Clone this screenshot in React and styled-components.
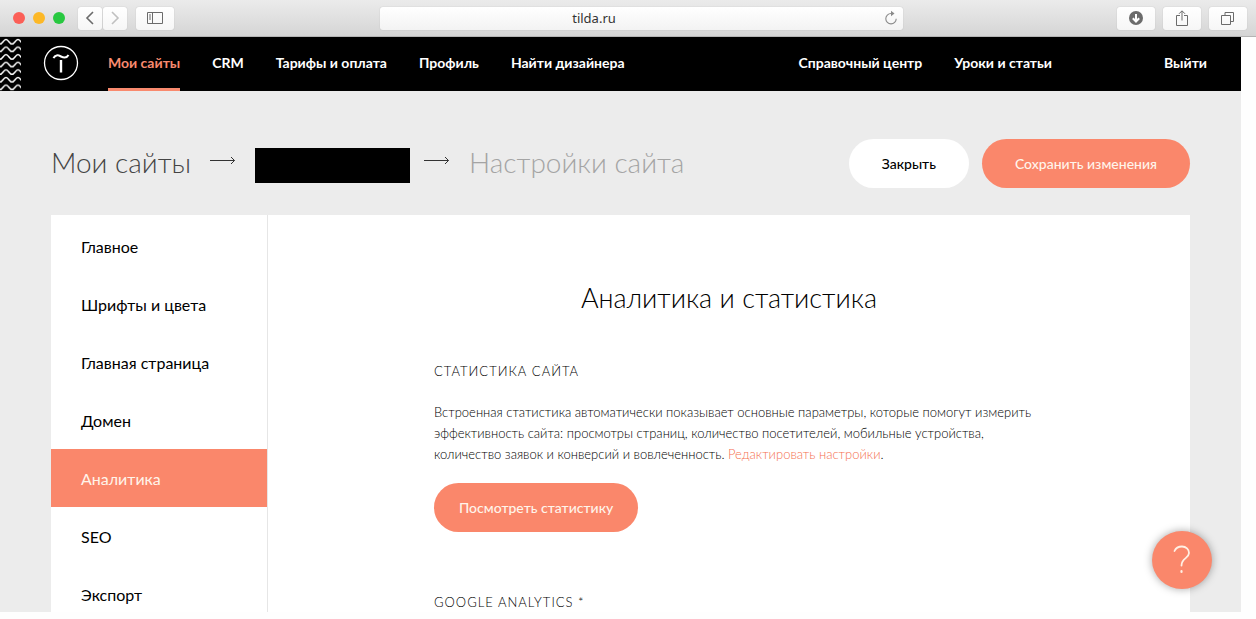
import styled, { createGlobalStyle } from "styled-components";

const menu = ["Мои сайты", "CRM", "Тарифы и оплата", "Профиль", "Найти дизайнера"];
const sections = ["Главное", "Шрифты и цвета", "Главная страница", "Домен", "Аналитика", "SEO", "Экспорт"];

function Chevron({ points, color }) {
    return (
        <svg width="12" height="16" viewBox="0 0 12 16" fill="none" stroke={color} strokeWidth="1.6">
            <polyline points={points} />
        </svg>
    );
}

function Arrow() {
    return (
        <ArrowIcon width="26" height="9" viewBox="0 0 26 9" fill="none" stroke="#333333" strokeWidth="1">
            <path d="M0 4.5H24.5M21 1L24.5 4.5L21 8" />
        </ArrowIcon>
    );
}

function Logo() {
    return (
        <svg width="36" height="36" viewBox="0 0 36 36" fill="none" stroke="#ffffff">
            <circle cx="18" cy="18" r="16.5" strokeWidth="1.3" />
            <path d="M10.5 13.2C12 9.5 15 10 18 11.5S23.5 13.5 25.5 10" strokeWidth="2" />
            <path d="M18 15V27.500" strokeWidth="2.400" />
        </svg>
    );
}

function Waves() {
    return (
        <svg width="21" height="54" fill="none" stroke="#ffffff" strokeWidth="1.5">
            <defs>
                <pattern id="waves" y="1" width="12" height="7.600" patternUnits="userSpaceOnUse">
                    <path d="M-6 1.500C-3.500 1.500 -2.500 6 0 6S3.500 1.500 6 1.500S9.500 6 12 6S15.500 1.500 18 1.500" />
                </pattern>
            </defs>
            <rect width="21" height="54" fill="url(#waves)" stroke="none" />
        </svg>
    );
}

function BrowserBar() {
    return (
        <Toolbar>
            <Side>
                <Lights>
                    <Light $color="#fb5f57" />
                    <Light $color="#fcb827" />
                    <Light $color="#28c840" />
                </Lights>
                <Pair>
                    <ToolButton $width={24} aria-label="Назад"><Chevron points="9,2 3,8 9,14" color="#6b6b6b" /></ToolButton>
                    <ToolButton $width={24} aria-label="Вперёд"><Chevron points="3,2 9,8 3,14" color="#c0c0c0" /></ToolButton>
                </Pair>
                <ToolButton $width={38} aria-label="Боковая панель">
                    <svg width="16" height="12" viewBox="0 0 16 12" fill="none" stroke="#6b6b6b">
                        <path d="M.5 .5H15.500V11.500H.5ZM5.500 .5V11.500M2 3H4M2 5H4M2 7H4" />
                    </svg>
                </ToolButton>
            </Side>
            <Address>
                <input type="text" aria-label="Адрес" defaultValue="tilda.ru" />
                <Reload aria-label="Обновить">
                    <svg width="14" height="16" viewBox="0 0 14 16" fill="none" stroke="#8a8a8a" strokeWidth="1.100">
                        <path d="M7 3.500A5.200 5.200 0 1 0 12.200 8.700" />
                        <path d="M7 .8L10.500 3.500L7 6.200Z" fill="#8a8a8a" stroke="none" />
                    </svg>
                </Reload>
            </Address>
            <Side $end>
                <ToolButton $width={38} aria-label="Загрузки">
                    <svg width="16" height="16" viewBox="0 0 16 16">
                        <circle cx="8" cy="8" r="7" fill="#6b6b6b" />
                        <path d="M8 4V11.500M4.800 8.200L8 11.500L11.200 8.200" fill="none" stroke="#ffffff" strokeWidth="2" />
                    </svg>
                </ToolButton>
                <ToolButton $width={38} aria-label="Поделиться">
                    <svg width="12" height="16" viewBox="0 0 12 16" fill="none" stroke="#6b6b6b">
                        <path d="M4 5.500H.5V15.500H11.500V5.500H8M6 10.500V1M3 3.800L6 .8L9 3.800" />
                    </svg>
                </ToolButton>
                <ToolButton $width={38} aria-label="Вкладки">
                    <svg width="14" height="14" viewBox="0 0 14 14" fill="none" stroke="#6b6b6b">
                        <path d="M.5 4.500H9.500V13.500H.5ZM4 4.500V1.500H12.500V10.500H9.500" />
                    </svg>
                </ToolButton>
            </Side>
        </Toolbar>
    );
}

export default function App() {
    return (
        <Window>
            <GlobalStyle />
            <BrowserBar />
            <Page>
                <Header>
                    <Waves />
                    <LogoLink href="#" aria-label="Tilda"><Logo /></LogoLink>
                    <Menu>
                        {menu.map((item, index) => (
                            <MenuLink key={item} href="#" $active={index === 0}>{item}</MenuLink>
                        ))}
                    </Menu>
                    <HelpMenu>
                        <MenuLink href="#">Справочный центр</MenuLink>
                        <MenuLink href="#">Уроки и статьи</MenuLink>
                    </HelpMenu>
                    <MenuLink href="#">Выйти</MenuLink>
                </Header>

                <TitleRow>
                    <Crumbs>
                        <Crumb href="#">Мои сайты</Crumb>
                        <Arrow />
                        <HiddenName />
                        <Arrow />
                        <CurrentCrumb>Настройки сайта</CurrentCrumb>
                    </Crumbs>
                    <Actions>
                        <PillButton $light>Закрыть</PillButton>
                        <PillButton>Сохранить изменения</PillButton>
                    </Actions>
                </TitleRow>

                <Panel>
                    <Sidebar>
                        {sections.map((item) => (
                            <SidebarLink key={item} href="#" $active={item === "Аналитика"}>{item}</SidebarLink>
                        ))}
                    </Sidebar>
                    <Main>
                        <Title>Аналитика и статистика</Title>
                        <Section>
                            <SectionTitle>СТАТИСТИКА САЙТА</SectionTitle>
                            <Text>
                                Встроенная статистика автоматически показывает основные параметры, которые помогут измерить
                                эффективность сайта: просмотры страниц, количество посетителей, мобильные устройства,
                                количество заявок и конверсий и вовлеченность. <a href="#">Редактировать настройки</a>.
                            </Text>
                            <PillButton $compact>Посмотреть статистику</PillButton>
                        </Section>
                        <Section>
                            <SectionTitle>GOOGLE ANALYTICS *</SectionTitle>
                        </Section>
                    </Main>
                </Panel>
                <HelpButton aria-label="Помощь">
                    <svg width="18" height="30" viewBox="0 0 18 30" fill="none" stroke="#fff0e4" strokeWidth="1.800" strokeLinecap="round">
                        <path d="M1.500 6C3 2.500 6 1.500 9 1.500C13 1.500 16 4.300 16 8C16 13.500 8.500 13 8.500 20.500" />
                        <path d="M8.500 26V27" strokeWidth="2.200" />
                    </svg>
                </HelpButton>
            </Page>
        </Window>
    );
}

const GlobalStyle = createGlobalStyle`
    * {
        box-sizing: border-box;
    }

    body {
        margin: 0;
        background: #fefefe;
        font-family: Lato, "Open Sans", sans-serif;
        color: #000000;
    }

    a {
        text-decoration: none;
    }

    button, input {
        font-family: inherit;
    }

    svg {
        display: block;
        flex-shrink: 0;
    }
`;

const Window = styled.div`
    display: flex;
    flex-direction: column;
    height: 100vh;
    overflow: hidden;
    padding-bottom: 7px;
`;

const Toolbar = styled.div`
    display: flex;
    align-items: center;
    flex-shrink: 0;
    height: 37px;
    padding: 0 9px 0 13px;
    background: linear-gradient(#ebebeb, #d5d5d5);
    border-bottom: 1px solid #b4b4b4;
`;

const Side = styled.div`
    display: flex;
    flex: 1;
    align-items: center;
    justify-content: ${({ $end }) => ($end ? "flex-end" : "flex-start")};
    gap: ${({ $end }) => ($end ? "8px" : "9px")};
`;

const Lights = styled.div`
    display: flex;
    gap: 8px;
    margin-right: 4px;
`;

const Light = styled.div`
    width: 12px;
    height: 12px;
    border-radius: 50%;
    background: ${({ $color }) => $color};
`;

const Pair = styled.div`
    display: flex;
    gap: 1px;
`;

const ToolButton = styled.button`
    display: flex;
    align-items: center;
    justify-content: center;
    width: ${({ $width }) => $width}px;
    height: 23px;
    padding: 0;
    background: linear-gradient(#ffffff, #f6f6f6);
    border: none;
    border-radius: 3px;
    box-shadow: 0 0 1px 0 #a0a0a0;
`;

const Address = styled.div`
    display: flex;
    align-items: center;
    width: 523px;
    max-width: 50%;
    height: 23px;
    margin-left: 22px;
    padding: 0 5px;
    background: linear-gradient(#ffffff, #f3f3f3);
    border-radius: 3px;
    box-shadow: 0 0 1px 0 #a0a0a0;

    input {
        flex: 1;
        min-width: 0;
        padding: 0 80px 0 0;
        background: none;
        border: none;
        font-family: "Noto Sans", sans-serif;
        font-size: 13px;
        line-height: 20px;
        text-align: center;
        color: #333333;
    }
`;

const Reload = styled.button`
    padding: 0;
    background: none;
    border: none;
`;

const Page = styled.div`
    position: relative;
    display: flex;
    flex: 1;
    flex-direction: column;
    min-height: 0;
    margin-right: 15px;
    overflow: hidden;
    background: #ececec;
`;

const Header = styled.header`
    display: flex;
    align-items: center;
    flex-shrink: 0;
    height: 54px;
    padding-right: 34px;
    background: #000000;
`;

const LogoLink = styled.a`
    margin: 0 29px 3px 22px;
`;

const Menu = styled.nav`
    display: flex;
    flex: 1;
    gap: 32px;
`;

const HelpMenu = styled(Menu)`
    flex: none;
    margin-right: 112px;
`;

const MenuLink = styled.a`
    height: 54px;
    border-bottom: 3px solid ${({ $active }) => ($active ? "#f98a6e" : "transparent")};
    font-size: 14px;
    font-weight: 700;
    line-height: 52px;
    white-space: nowrap;
    color: ${({ $active }) => ($active ? "#f98a6e" : "#ffffff")};
`;

const TitleRow = styled.div`
    display: flex;
    align-items: center;
    justify-content: space-between;
    flex-shrink: 0;
    margin: 48px 51px 27px;
`;

const Crumbs = styled.div`
    display: flex;
    align-items: center;
    gap: 19px;
    padding-bottom: 4px;
`;

const Crumb = styled.a`
    font-size: 28px;
    font-weight: 300;
    line-height: 40px;
    white-space: nowrap;
    color: #444444;
`;

const CurrentCrumb = styled.span`
    font-size: 28px;
    font-weight: 300;
    line-height: 40px;
    white-space: nowrap;
    color: #a4a4a4;
`;

const ArrowIcon = styled.svg`
    margin-bottom: 2px;
`;

const HiddenName = styled.div`
    width: 155px;
    height: 35px;
    margin: 8px -5px 0 0;
    background: #000000;
`;

const Actions = styled.div`
    display: flex;
    gap: 13px;
`;

const PillButton = styled.button`
    height: 49px;
    padding: 0 ${({ $compact }) => ($compact ? "25px" : "33px")};
    background: ${({ $light }) => ($light ? "#ffffff" : "#fa876b")};
    border: none;
    border-radius: 25px;
    font-size: 14px;
    font-weight: 500;
    line-height: 20px;
    white-space: nowrap;
    color: ${({ $light }) => ($light ? "#000000" : "#fff4ea")};
`;

const Panel = styled.div`
    display: flex;
    flex-shrink: 0;
    margin: 0 51px;
    background: #ffffff;
`;

const Sidebar = styled.nav`
    display: flex;
    flex-direction: column;
    flex-shrink: 0;
    width: 217px;
    padding: 2px 0;
    border-right: 1px solid #e6e6e6;
`;

const SidebarLink = styled.a`
    height: 58px;
    padding: 2px 0 0 30px;
    background: ${({ $active }) => ($active ? "#fa876b" : "transparent")};
    font-size: 16px;
    line-height: 56px;
    color: ${({ $active }) => ($active ? "#fff4ea" : "#000000")};
`;

const Main = styled.main`
    display: flex;
    flex: 1;
    flex-direction: column;
    align-items: center;
    padding-top: 62px;
`;

const Title = styled.h1`
    margin: 0 0 42px;
    font-size: 27px;
    font-weight: 300;
    line-height: 42px;
`;

const Section = styled.section`
    width: 590px;
    margin-bottom: 60px;
`;

const SectionTitle = styled.h2`
    margin: 0 0 20px;
    font-size: 13px;
    font-weight: 300;
    line-height: 21px;
    letter-spacing: 1px;
    color: #000000;
`;

const Text = styled.p`
    width: 600px;
    margin: 0 0 18px;
    font-size: 13px;
    font-weight: 300;
    line-height: 21px;
    color: #000000;

    a {
        color: #f5704f;
    }
`;

const HelpButton = styled.button`
    position: absolute;
    right: 29px;
    bottom: 23px;
    display: flex;
    align-items: center;
    justify-content: center;
    width: 60px;
    height: 58px;
    padding: 0;
    background: #fa876b;
    border: none;
    border-radius: 50%;
    box-shadow: 0 0 8px rgba(0, 0, 0, 0.35);
`;
